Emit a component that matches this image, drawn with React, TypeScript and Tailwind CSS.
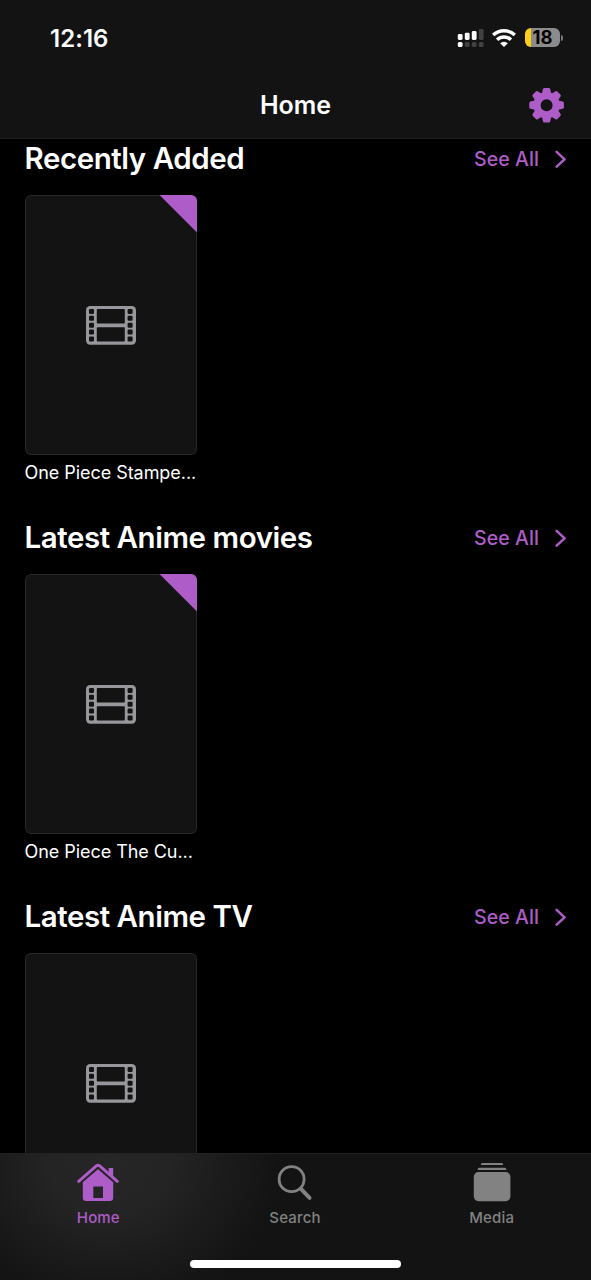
import { clsx } from "clsx";

type Section = {
  name: string;
  item?: string;
  unwatched?: boolean;
};

const sections: Section[] = [
  { name: "Recently Added", item: "One Piece Stampe...", unwatched: true },
  { name: "Latest Anime movies", item: "One Piece The Cu...", unwatched: true },
  { name: "Latest Anime TV" },
];

function SignalIcon() {
  return (
    <svg width="27" height="18" viewBox="0 0 27 18" fill="white">
      <rect x="0.8" y="5" width="4.8" height="6" rx="1.4" />
      <rect x="7.8" y="3.7" width="4.8" height="7.3" rx="1.4" />
      <rect x="14.8" y="2" width="4.8" height="9" rx="1.4" />
      <rect x="21.8" y="0" width="4.8" height="11" rx="1.4" fill="#414141" />
      <rect x="0.8" y="13" width="4.8" height="5" rx="1.6" />
      <g fill="#414141">
        <rect x="7.8" y="13" width="4.8" height="5" rx="1.6" />
        <rect x="14.8" y="13" width="4.8" height="5" rx="1.6" />
        <rect x="21.8" y="13" width="4.8" height="5" rx="1.6" />
      </g>
    </svg>
  );
}

function WifiIcon() {
  return (
    <svg width="24" height="18" viewBox="0 0 24 18" fill="none" stroke="white" strokeWidth="3.5">
      <path d="M1.2 6.1a15.6 15.6 0 0 1 21.6 0" />
      <path d="M5.1 10.7a9.9 9.9 0 0 1 13.8 0" />
      <path
        d="M12.5 17.6Q12 18 11.5 17.6L8.1 14.3a5.6 5.6 0 0 1 7.8 0Z"
        fill="white"
        stroke="none"
      />
    </svg>
  );
}

function GearIcon() {
  return (
    <svg width="36" height="36" viewBox="-18.6 -18.2 36 36" fill="#ae5cc8">
      <circle r="9.6" fill="none" stroke="#ae5cc8" strokeWidth="7.2" />
      {[0, 45, 90, 135, 180, 225, 270, 315].map((angle) => (
        <path
          key={angle}
          d="M-4.6-11.6 -3.6-16.2Q-3.3-17.3-2.1-17.3H2.1Q3.3-17.3 3.6-16.2L4.6-11.6Z"
          transform={`rotate(${angle})`}
        />
      ))}
    </svg>
  );
}

function FilmIcon() {
  const holes = [3, 9.8, 16.7, 23.5, 30.4];
  return (
    <svg width="50" height="39" viewBox="0 0 50 39">
      <rect width="50" height="38.7" rx="4.2" fill="#97979c" />
      <g fill="#131313">
        <rect x="10.8" y="3.1" width="28" height="14.4" rx="0.8" />
        <rect x="10.8" y="21.2" width="28" height="14.4" rx="0.8" />
        {holes.map((y) => (
          <g key={y}>
            <rect x="3" y={y} width="5" height="5" rx="1.2" />
            <rect x="41.6" y={y} width="5" height="5" rx="1.2" />
          </g>
        ))}
      </g>
    </svg>
  );
}

function HomeIcon() {
  return (
    <svg width="42" height="40" viewBox="0 0 42 40" fill="#ae5cc8">
      <path d="M31.6 5.6Q31.6 5 32.2 5H35.6Q36.2 5 36.2 5.6V14L31.6 10Z" />
      <path
        d="M1.7 18.4 19.3 2.9Q21 1.5 22.7 2.9L40.3 18.4"
        fill="none"
        stroke="#ae5cc8"
        strokeWidth="2.9"
        strokeLinecap="round"
      />
      <path
        fillRule="evenodd"
        d="M5.8 19.2 21 6.2 36.2 19.2V34.7Q36.2 38 32.9 38H9.1Q5.8 38 5.8 34.7ZM16.3 23.4V35H26V23.4Z"
      />
    </svg>
  );
}

function SearchIcon() {
  return (
    <svg width="42" height="40" viewBox="0 0 42 40" fill="none" stroke="#828282">
      <circle cx="17.6" cy="16.2" r="12.5" strokeWidth="2.8" />
      <path d="M27.2 26.2 35.6 34.9" strokeWidth="4" strokeLinecap="round" />
    </svg>
  );
}

function MediaIcon() {
  return (
    <svg width="42" height="40" viewBox="0 0 42 40" fill="#828282">
      <path d="M10 1Q10.4 0 11.4 0H30.6Q31.6 0 32 1L32.2 2.1H9.8Z" />
      <path d="M6.8 6Q7.2 4.8 8.4 4.8H33.6Q34.8 4.8 35.2 6L35.5 7.1H6.5Z" />
      <rect x="2.8" y="9.1" width="36.6" height="29.1" rx="4.6" />
    </svg>
  );
}

const tabs = [
  { label: "Home", Icon: HomeIcon, active: true },
  { label: "Search", Icon: SearchIcon, active: false },
  { label: "Media", Icon: MediaIcon, active: false },
];

function Poster({ unwatched }: { unwatched?: boolean }) {
  return (
    <div className="relative flex h-[259.5px] w-[172.5px] items-center justify-center overflow-hidden rounded-[6px] bg-[#131313] pt-px">
      <FilmIcon />
      <div className="absolute inset-0 rounded-[6px] border-[1.5px] border-[#282828]" />
      {unwatched && (
        <svg className="absolute top-0 right-0" width="38" height="38" viewBox="0 0 38 38">
          <path d="M0.5 0H38V37.5Z" fill="#ae5cc8" />
        </svg>
      )}
    </div>
  );
}

function MediaSection({ section }: { section: Section }) {
  const { name, item, unwatched } = section;

  return (
    <section className="h-[379px] shrink-0 pr-6 pl-[24.5px]">
      <div className="flex h-9 items-center justify-between">
        <h2 className="text-[29.5px] leading-9 font-semibold tracking-[-0.45px] whitespace-nowrap">
          {name}
        </h2>
        <button className="flex items-center gap-4 pt-px text-[19.5px] leading-9 font-medium text-[#ae5cc8]">
          <span className="tracking-[0.1px] whitespace-nowrap">See All</span>
          <svg width="12" height="18" viewBox="0 0 12 18" fill="none" stroke="#ae5cc8" strokeWidth="2.5" strokeLinecap="round" strokeLinejoin="round">
            <path d="M1.6 1.8 9.6 9.3 1.6 16.6" />
          </svg>
        </button>
      </div>
      <div className="mt-[19px]">
        <Poster unwatched={unwatched} />
        {item && (
          <p className="mt-[6.5px] text-[18px] leading-6 tracking-[-0.05px] whitespace-nowrap">{item}</p>
        )}
      </div>
    </section>
  );
}

export default function App() {
  return (
    <div className="flex h-[1280px] w-[591px] flex-col overflow-hidden bg-black font-['Inter',sans-serif] text-white">
      <header className="h-[139px] shrink-0 border-b border-[#1c1c1c] bg-[#131313]">
        <div className="flex h-[75px] items-center justify-between pr-[28px] pl-[50px]">
          <span className="pt-[2px] text-[24px] font-semibold tracking-[0.05px]">12:16</span>
          <div className="flex items-center">
            <SignalIcon />
            <div className="ml-2">
              <WifiIcon />
            </div>
            <div className="ml-[9px] flex h-[19px] w-[35px] items-center justify-center rounded-[6px] bg-linear-to-r from-[#fdd017] from-[6.5px] to-[#8b8b8b] to-[6.5px] text-[18.5px] leading-[19px] font-bold text-black">
              <span className="tracking-[-0.1px]">18</span>
            </div>
            <div className="ml-px h-[6px] w-[2px] rounded-r-full bg-[#777777]" />
          </div>
        </div>
        <div className="grid h-[60px] grid-cols-3 items-center pr-[27px]">
          <span />
          <h1 className="pt-[2px] pl-[27px] text-center text-[25px] font-semibold tracking-[-0.05px]">Home</h1>
          <button className="justify-self-end">
            <GearIcon />
          </button>
        </div>
      </header>

      <main className="flex min-h-0 flex-1 flex-col overflow-hidden pt-px">
        {sections.map((section) => (
          <MediaSection key={section.name} section={section} />
        ))}
      </main>

      <nav className="flex h-[127px] shrink-0 flex-col items-center border-t border-[#222222] bg-[#131313] bg-[radial-gradient(ellipse_170px_145px_at_110px_10px,#262626_0%,#242424_35%,#1b1b1b_68%,#131313_100%)]">
        <div className="grid w-full grid-cols-3 pt-[9px] pr-px">
          {tabs.map(({ label, Icon, active }) => (
            <button
              key={label}
              className={clsx(
                "flex flex-col items-center text-[15px] leading-5 font-medium tracking-[0.15px]",
                active ? "text-[#ae5cc8]" : "text-[#828282]",
              )}
            >
              <Icon />
              <span className="mt-[5px]">{label}</span>
            </button>
          ))}
        </div>
        <div className="mt-8 h-2 w-[211px] rounded-full bg-white" />
      </nav>
    </div>
  );
}
